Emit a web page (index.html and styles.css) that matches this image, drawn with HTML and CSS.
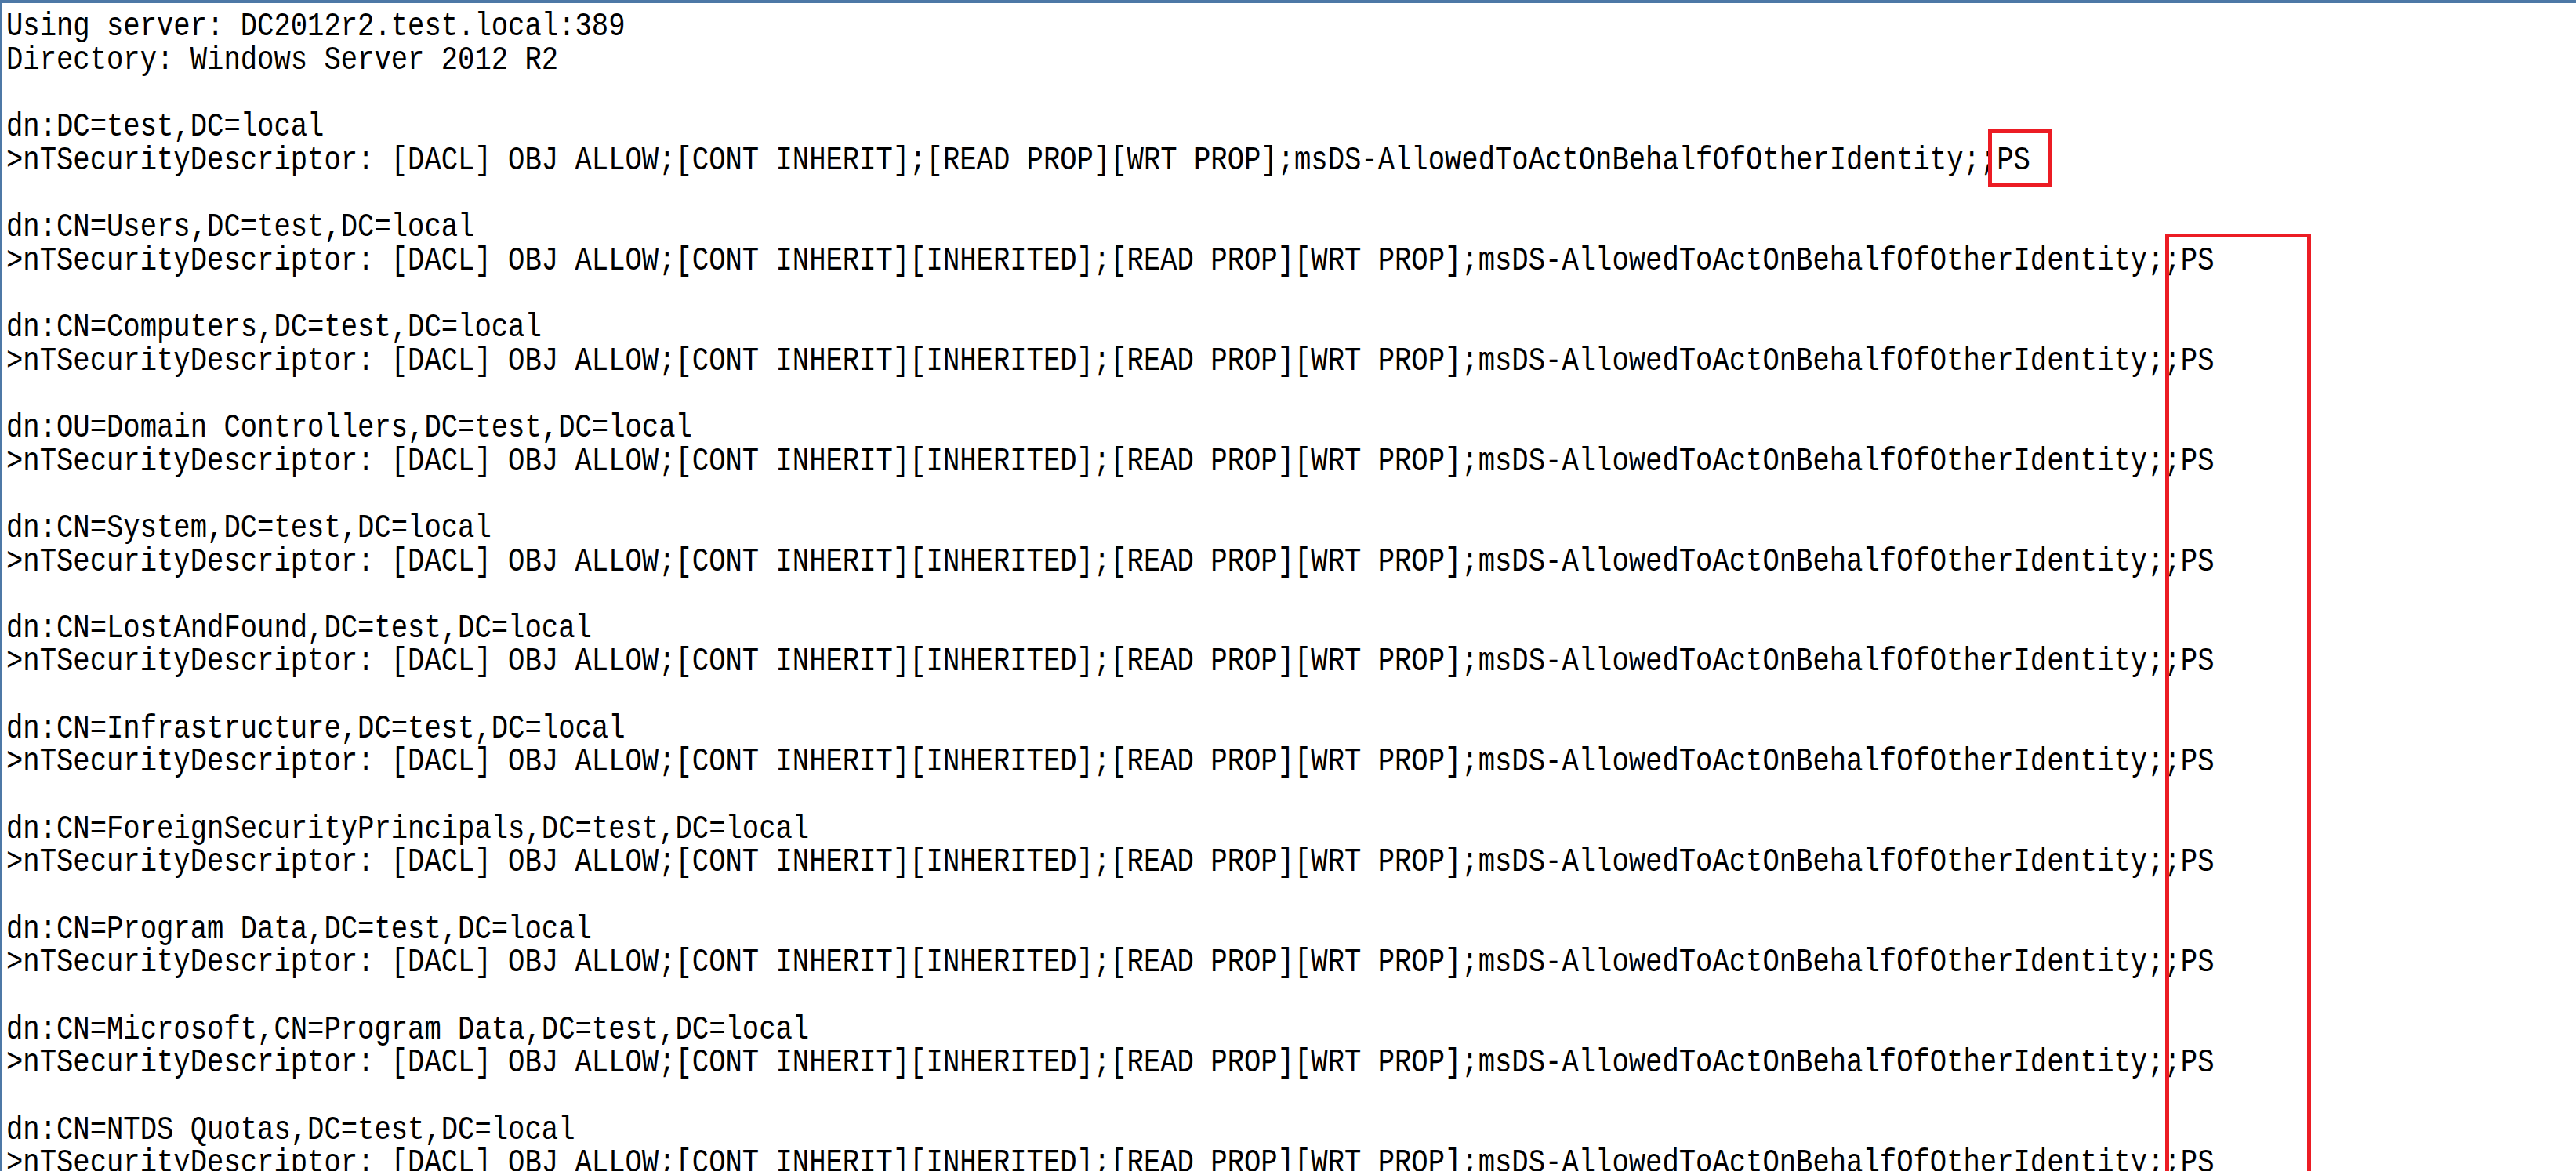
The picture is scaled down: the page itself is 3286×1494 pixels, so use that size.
FILE: index.html
```html
<!DOCTYPE html>
<html>
<head>
<meta charset="utf-8">
<title>ldap output</title>
<link rel="stylesheet" href="styles.css">
</head>
<body>
<div class="window">
<div class="console">
<div class="line">Using server: DC2012r2.test.local:389</div>
<div class="line">Directory: Windows Server 2012 R2</div>
<div class="line"> </div>
<div class="line">dn:DC=test,DC=local</div>
<div class="line">&gt;nTSecurityDescriptor: [DACL] OBJ ALLOW;[CONT INHERIT];[READ PROP][WRT PROP];msDS-AllowedToActOnBehalfOfOtherIdentity;;PS</div>
<div class="line"> </div>
<div class="line">dn:CN=Users,DC=test,DC=local</div>
<div class="line">&gt;nTSecurityDescriptor: [DACL] OBJ ALLOW;[CONT INHERIT][INHERITED];[READ PROP][WRT PROP];msDS-AllowedToActOnBehalfOfOtherIdentity;;PS</div>
<div class="line"> </div>
<div class="line">dn:CN=Computers,DC=test,DC=local</div>
<div class="line">&gt;nTSecurityDescriptor: [DACL] OBJ ALLOW;[CONT INHERIT][INHERITED];[READ PROP][WRT PROP];msDS-AllowedToActOnBehalfOfOtherIdentity;;PS</div>
<div class="line"> </div>
<div class="line">dn:OU=Domain Controllers,DC=test,DC=local</div>
<div class="line">&gt;nTSecurityDescriptor: [DACL] OBJ ALLOW;[CONT INHERIT][INHERITED];[READ PROP][WRT PROP];msDS-AllowedToActOnBehalfOfOtherIdentity;;PS</div>
<div class="line"> </div>
<div class="line">dn:CN=System,DC=test,DC=local</div>
<div class="line">&gt;nTSecurityDescriptor: [DACL] OBJ ALLOW;[CONT INHERIT][INHERITED];[READ PROP][WRT PROP];msDS-AllowedToActOnBehalfOfOtherIdentity;;PS</div>
<div class="line"> </div>
<div class="line">dn:CN=LostAndFound,DC=test,DC=local</div>
<div class="line">&gt;nTSecurityDescriptor: [DACL] OBJ ALLOW;[CONT INHERIT][INHERITED];[READ PROP][WRT PROP];msDS-AllowedToActOnBehalfOfOtherIdentity;;PS</div>
<div class="line"> </div>
<div class="line">dn:CN=Infrastructure,DC=test,DC=local</div>
<div class="line">&gt;nTSecurityDescriptor: [DACL] OBJ ALLOW;[CONT INHERIT][INHERITED];[READ PROP][WRT PROP];msDS-AllowedToActOnBehalfOfOtherIdentity;;PS</div>
<div class="line"> </div>
<div class="line">dn:CN=ForeignSecurityPrincipals,DC=test,DC=local</div>
<div class="line">&gt;nTSecurityDescriptor: [DACL] OBJ ALLOW;[CONT INHERIT][INHERITED];[READ PROP][WRT PROP];msDS-AllowedToActOnBehalfOfOtherIdentity;;PS</div>
<div class="line"> </div>
<div class="line">dn:CN=Program Data,DC=test,DC=local</div>
<div class="line">&gt;nTSecurityDescriptor: [DACL] OBJ ALLOW;[CONT INHERIT][INHERITED];[READ PROP][WRT PROP];msDS-AllowedToActOnBehalfOfOtherIdentity;;PS</div>
<div class="line"> </div>
<div class="line">dn:CN=Microsoft,CN=Program Data,DC=test,DC=local</div>
<div class="line">&gt;nTSecurityDescriptor: [DACL] OBJ ALLOW;[CONT INHERIT][INHERITED];[READ PROP][WRT PROP];msDS-AllowedToActOnBehalfOfOtherIdentity;;PS</div>
<div class="line"> </div>
<div class="line">dn:CN=NTDS Quotas,DC=test,DC=local</div>
<div class="line">&gt;nTSecurityDescriptor: [DACL] OBJ ALLOW;[CONT INHERIT][INHERITED];[READ PROP][WRT PROP];msDS-AllowedToActOnBehalfOfOtherIdentity;;PS</div>
</div>
<div class="mark mark-single"></div>
<div class="mark mark-column"></div>
</div>
</body>
</html>
```
FILE: styles.css
```css
html, body {
  margin: 0;
  padding: 0;
  background: #ffffff;
  overflow: hidden;
}

.window {
  position: relative;
  box-sizing: border-box;
  width: 3286px;
  height: 1494px;
  overflow: hidden;
  background: #ffffff;
  border-top: 4px solid #4d78a6;
  border-left: 3px solid #4d78a6;
  padding: 9px 0 0 5px;
}

.console {
  font-family: "Liberation Mono", "DejaVu Sans Mono", monospace;
  font-size: 43px;
  line-height: 42.67px;
  color: #000000;
  width: max-content;
  transform: scaleX(0.8269);
  transform-origin: 0 0;
}

.line {
  white-space: pre;
  height: 42.67px;
}

.mark {
  position: absolute;
  box-sizing: border-box;
  border: 5px solid #ec1c24;
}

.mark-single {
  left: 2533px;
  top: 161px;
  width: 82px;
  height: 74px;
}

.mark-column {
  left: 2759px;
  top: 294px;
  width: 186px;
  height: 1400px;
}
```
